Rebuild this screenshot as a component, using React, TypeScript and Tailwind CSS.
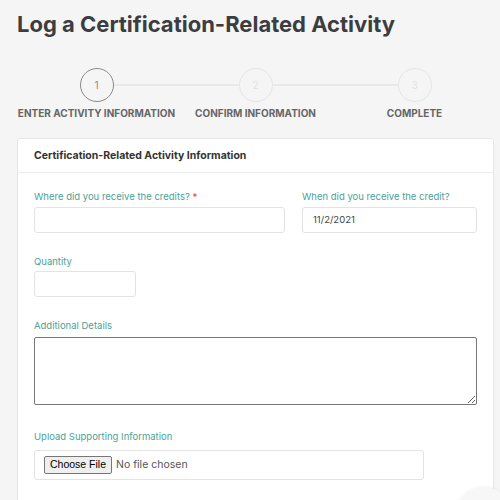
import React from "react";

function Step({ n, label, active, left, right }: { n: number; label: string; active?: boolean; left?: boolean; right?: boolean }) {
  return (
    <div className="flex flex-col items-center min-w-0">
      <div className="flex items-center w-full">
        <div className={`flex-1 h-[2px] ${left ? "bg-[#e9e9e9]" : ""}`} />
        <div
          className={`w-[34px] h-[34px] rounded-full flex items-center justify-center text-[10px] ${
            active ? "border-[1.5px] border-[#8a8a8a] text-[#8a8a8a]" : "border-[1.5px] border-[#e6e6e6] text-[#e2e2e2]"
          }`}
        >
          {n}
        </div>
        <div className={`flex-1 h-[2px] ${right ? "bg-[#e9e9e9]" : ""}`} />
      </div>
      <div className="mt-[4px] text-[10px] font-bold text-[#666666] leading-[14px] whitespace-nowrap">{label}</div>
    </div>
  );
}

export default function App() {
  return (
    <div
      className="relative w-[500px] h-[500px] overflow-hidden bg-[#f5f5f5]"
      style={{ fontFamily: 'Inter, sans-serif' }}
    >
      <div className="pl-[17px] pr-[6px]">
        <h1 className="pt-[10px] text-[22px] leading-[28px] font-bold text-[#3c3d41]">Log a Certification-Related Activity</h1>

        <div className="grid grid-cols-3 mt-[30px]">
          <Step n={1} label="ENTER ACTIVITY INFORMATION" active right />
          <Step n={2} label="CONFIRM INFORMATION" left right />
          <Step n={3} label="COMPLETE" left />
        </div>

        <div className="mt-[18px] bg-white border border-[#e6e6e6] rounded-[3px]">
          <div className="h-[34px] flex items-center px-[16px] border-b border-[#ececec] text-[10.5px] font-bold text-[#333333]">
            Certification-Related Activity Information
          </div>
          <div className="px-[16px] pt-[16px] pb-[30px]">
            <div className="flex gap-[17px]">
              <div className="w-[251px]">
                <div className="text-[9.5px] leading-[16px] text-[#4e9f98] mb-[2px] whitespace-nowrap">
                  Where did you receive the credits? <span className="text-[#e53935]">*</span>
                </div>
                <div className="h-[26px] border border-[#e3e3e3] rounded-[3px]" />
              </div>
              <div className="w-[175px]">
                <div className="text-[9.5px] leading-[16px] text-[#4e9f98] mb-[2px] whitespace-nowrap">When did you receive the credit?</div>
                <div className="h-[26px] border border-[#e3e3e3] rounded-[3px] flex items-center px-[10px] text-[9.5px] text-[#444444]">
                  11/2/2021
                </div>
              </div>
            </div>

            <div className="mt-[21px]">
              <div className="text-[9.5px] leading-[16px] text-[#4e9f98] mb-[1px]">Quantity</div>
              <div className="w-[102px] h-[26px] border border-[#e3e3e3] rounded-[3px]" />
            </div>

            <div className="mt-[21px]">
              <div className="text-[9.5px] leading-[16px] text-[#4e9f98] mb-[3px]">Additional Details</div>
              <textarea className="block w-[443px] h-[68px] border border-[#777777] rounded-[2px] bg-white" />
            </div>

            <div className="mt-[24px]">
              <div className="text-[9.5px] leading-[16px] text-[#4e9f98] mb-[5px]">Upload Supporting Information</div>
              <div className="w-[390px] h-[30px] border border-[#e3e3e3] rounded-[3px] flex items-center px-[9px]">
                <div
                  className="h-[18px] px-[5px] flex items-center border border-[#767676] rounded-[2px] bg-[#efefef] text-[10.5px] text-black"
                  style={{ fontFamily: '"Liberation Sans", Arial, sans-serif' }}
                >
                  Choose File
                </div>
                <div className="ml-[4px] text-[10.5px] text-[#555555]">No file chosen</div>
              </div>
            </div>
          </div>
        </div>
      </div>
      <div className="absolute left-[456px] top-[487px] w-[56px] h-[56px] rounded-full bg-[#f7f7f7] shadow-[0_0_4px_rgba(0,0,0,0.06)]" />
    </div>
  );
}
